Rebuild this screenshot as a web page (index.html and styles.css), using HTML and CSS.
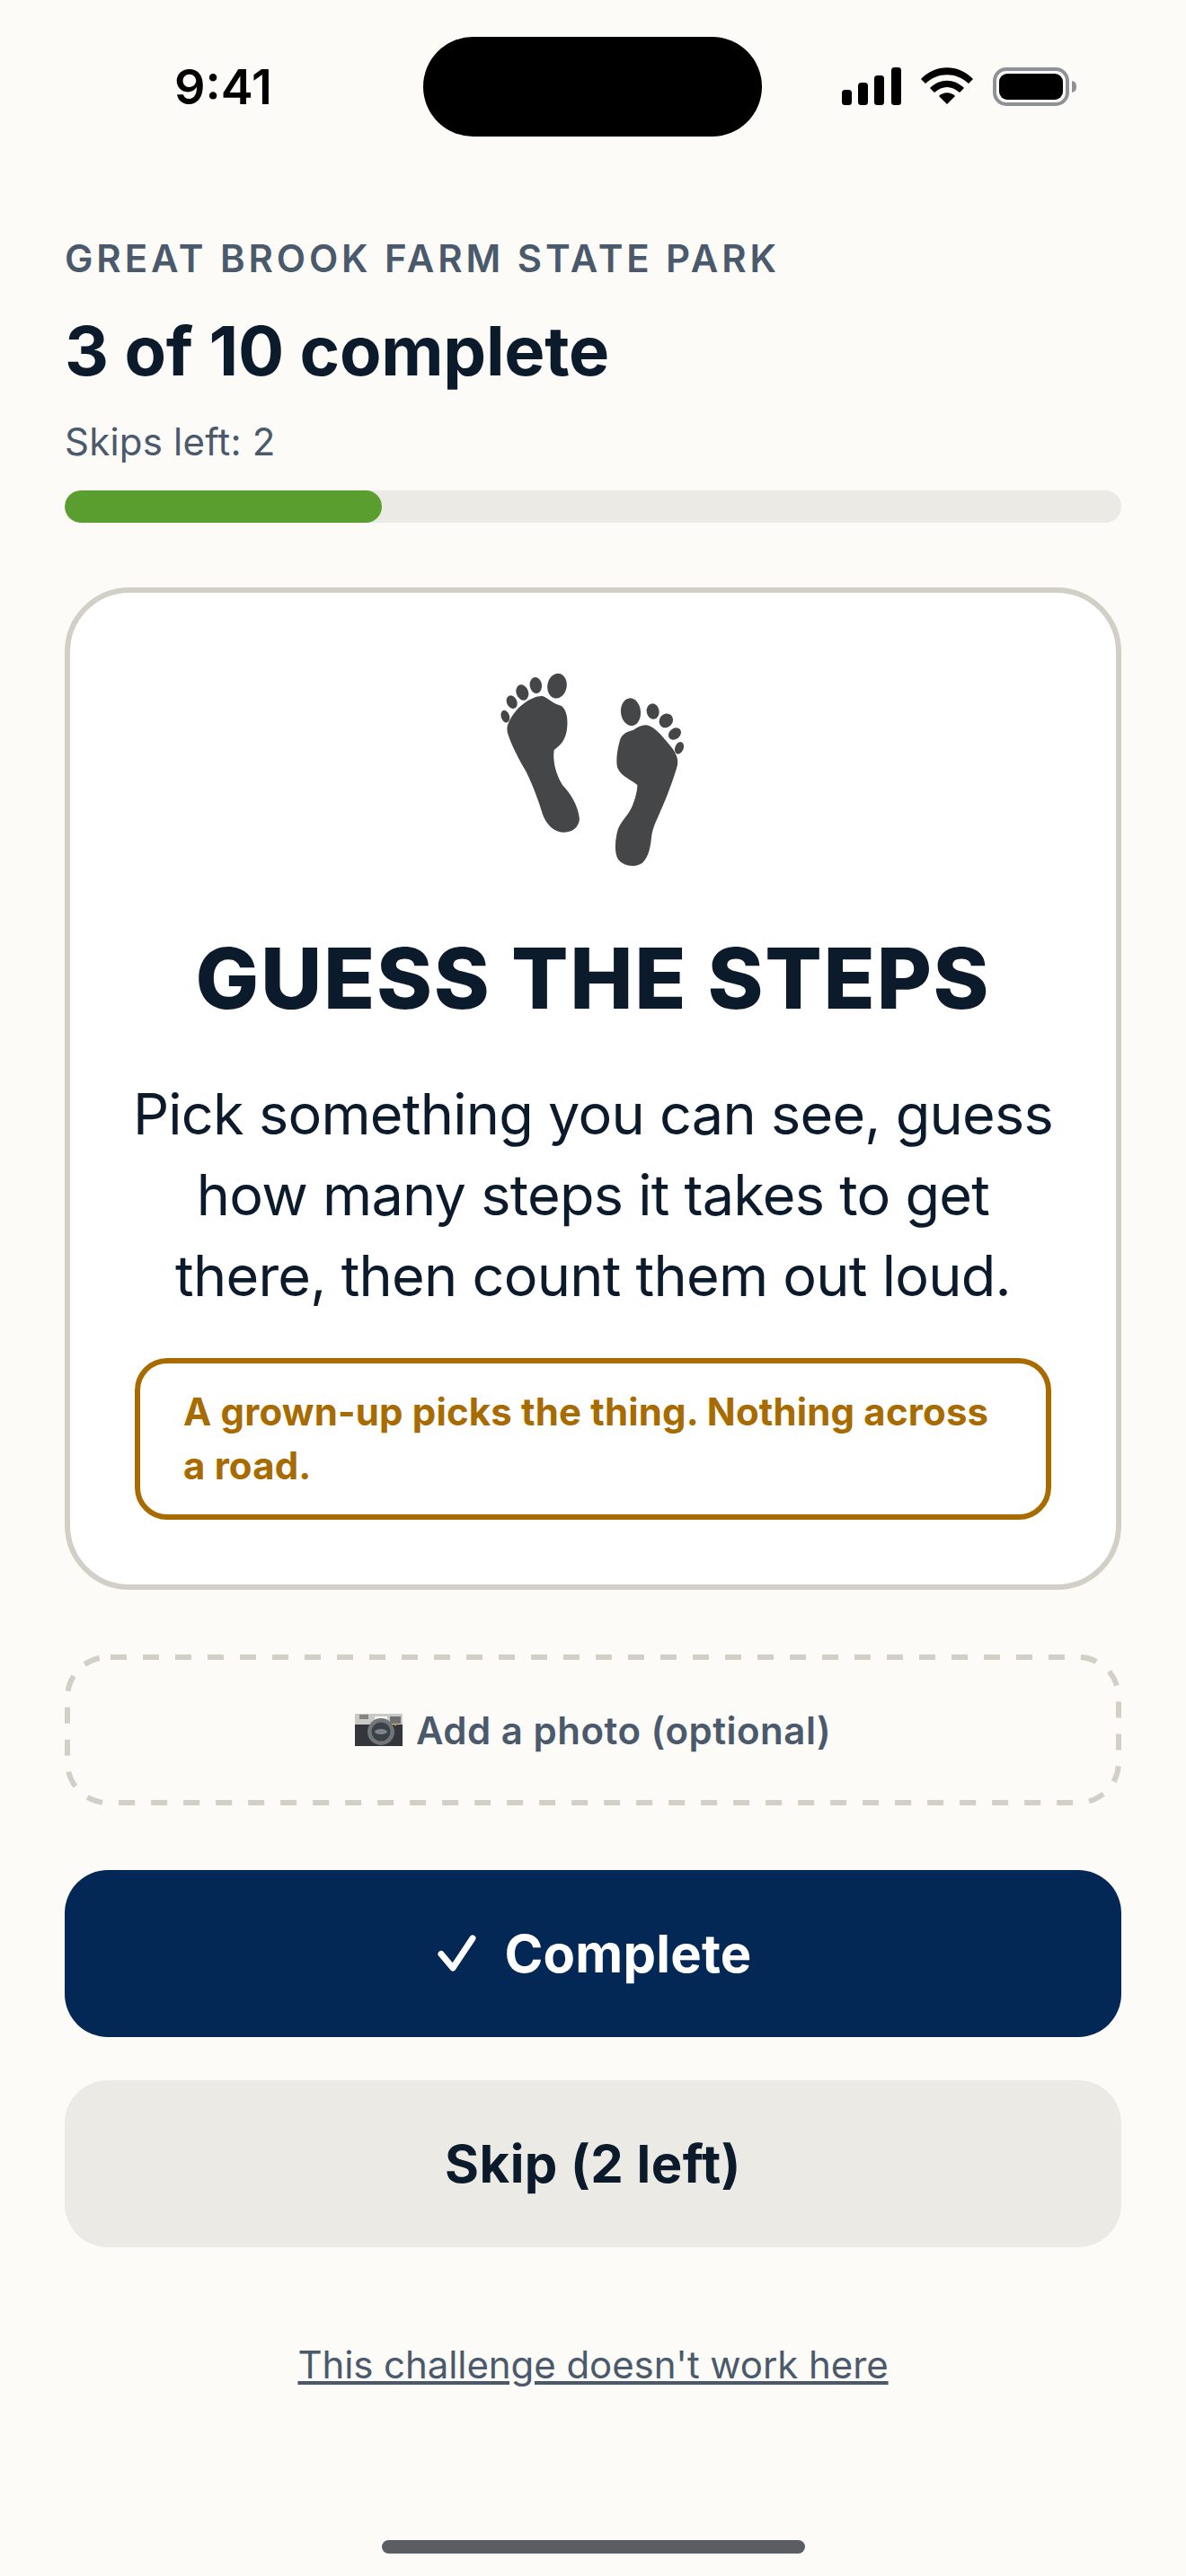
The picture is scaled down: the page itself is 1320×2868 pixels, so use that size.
FILE: index.html
```html
<!DOCTYPE html>
<html lang="en">
<head>
<meta charset="utf-8">
<title>Great Brook Farm State Park</title>
<link rel="stylesheet" href="styles.css">
</head>
<body>
<div class="page">
  <header class="status">
    <span class="time">9:41</span>
    <div class="island"></div>
    <div class="status-icons">
      <svg class="signal" viewBox="0 0 66 42" width="66" height="42"><rect x="0" y="25" width="11" height="17" rx="3.5"/><rect x="18" y="17" width="11" height="25" rx="3.5"/><rect x="36" y="9" width="11" height="33" rx="3.5"/><rect x="55" y="0" width="11" height="42" rx="3.5"/></svg>
      <svg class="wifi" viewBox="0 0 58 42" width="58" height="42"><path d="M0 13 C16 -4 42 -4 58 13 L53 18 C39 5 19 5 5 18Z"/><path d="M10 23 C21 12 37 12 48 23 L43 28 C34 20 24 20 15 28Z"/><path d="M20 32 C25 27 33 27 38 32 L29 41Z"/></svg>
      <svg class="battery" viewBox="0 0 94 43" width="94" height="43"><rect x="2" y="2" width="81" height="39" rx="13" fill="none" stroke="#8e9297" stroke-width="4"/><rect x="7" y="7" width="71" height="29" rx="9"/><path d="M88 15 C92 16 93 18 93 21.5 C93 25 92 27 88 28Z" fill="#8e9297"/></svg>
    </div>
  </header>

  <main class="content">
    <p class="park">GREAT BROOK FARM STATE PARK</p>
    <h1 class="count">3 of 10 complete</h1>
    <p class="skips">Skips left: 2</p>
    <div class="track"><div class="fill" style="width:30%"></div></div>

    <section class="card">
      <svg class="feet" viewBox="0 0 960 810" width="320" height="270" fill="#454648">
        <path d="M195 262 C205 235 225 205 255 185 C275 172 295 163 312 165 C330 172 345 190 375 198 C392 212 396 240 394 265 C392 300 380 325 350 345 C345 380 355 425 378 462 C405 490 430 530 435 575 C432 605 410 620 380 620 C350 618 325 595 312 560 C300 520 280 465 258 420 C235 380 210 335 197 295 C193 285 192 272 195 262Z"/>
        <ellipse cx="360" cy="131" rx="32" ry="42" transform="rotate(10 360 131)"/>
        <ellipse cx="289" cy="129" rx="20" ry="27" transform="rotate(-8 289 129)"/>
        <ellipse cx="244" cy="153" rx="20" ry="27" transform="rotate(-20 244 153)"/>
        <ellipse cx="209" cy="185" rx="17" ry="23" transform="rotate(-25 209 185)"/>
        <ellipse cx="187" cy="233" rx="14" ry="21" transform="rotate(-18 187 233)"/>
        <path d="M660 262 C690 268 720 310 745 340 C760 360 765 380 762 395 C750 440 725 505 705 550 C690 585 680 605 676 630 C672 665 668 700 645 722 C620 738 585 735 565 712 C550 690 553 640 565 605 C580 575 600 560 612 530 C622 505 628 480 628 462 C610 445 575 435 562 405 C555 380 562 340 570 312 C575 292 595 283 615 278 C630 268 645 260 660 262Z"/>
        <ellipse cx="606" cy="218" rx="33" ry="46" transform="rotate(-6 606 218)"/>
        <ellipse cx="680" cy="216" rx="21" ry="26" transform="rotate(-10 680 216)"/>
        <ellipse cx="724" cy="247" rx="22" ry="25" transform="rotate(40 724 247)"/>
        <ellipse cx="753" cy="291" rx="18" ry="23" transform="rotate(50 753 291)"/>
        <ellipse cx="768" cy="338" rx="14" ry="21" transform="rotate(22 768 338)"/>
      </svg>
      <h2 class="title">GUESS THE STEPS</h2>
      <p class="desc">Pick something you can see, guess how many steps it takes to get there, then count them out loud.</p>
      <p class="note">A grown-up picks the thing. Nothing across a road.</p>
    </section>

    <button class="photo" type="button">
      <svg class="dash" viewBox="0 0 1176 168" width="1176" height="168"><rect x="3" y="3" width="1170" height="162" rx="45" fill="none" stroke="#d2cfc6" stroke-width="6" stroke-dasharray="18 18" stroke-dashoffset="-3"/></svg>
      <svg class="cam" viewBox="0 0 53 36" width="53" height="36"><rect x="0" y="0" width="53" height="36" fill="#c9c9c6"/><rect x="22" y="3" width="14" height="4" fill="#f4f4f2"/><rect x="39" y="3" width="12" height="8" fill="#6d7074"/><rect x="5" y="1" width="10" height="5" fill="#83857f"/><rect x="0" y="12" width="53" height="24" fill="#33363b"/><circle cx="29" cy="20" r="15" fill="#70757a"/><circle cx="29" cy="20" r="10.5" fill="#3b4148"/><ellipse cx="29" cy="20" rx="7" ry="3" fill="#7d838a"/><circle cx="45" cy="12" r="1.4" fill="#d99a20"/></svg>
      <span>Add a photo (optional)</span>
    </button>

    <button class="btn primary" type="button">
      <svg class="check" viewBox="0 0 44 42" width="44" height="42"><path d="M4 21.5 L17 37 L39 4" fill="none" stroke="#fff" stroke-width="7" stroke-linecap="round" stroke-linejoin="round"/></svg>
      <span>Complete</span>
    </button>
    <button class="btn secondary" type="button">Skip (2 left)</button>
    <a class="report" href="#">This challenge doesn't work here</a>
  </main>

  <div class="home"></div>
</div>
</body>
</html>
```
FILE: styles.css
```css
* { box-sizing: border-box; }
html, body { margin: 0; padding: 0; }
body {
  background: #fcfbf8;
  color: #0c1b2c;
  font-family: Inter, "Liberation Sans", sans-serif;
}
.page {
  display: flex;
  flex-direction: column;
  height: 2868px;
  overflow: hidden;
}
.status {
  display: flex;
  align-items: center;
  height: 150px;
  padding-top: 42px;
  flex: none;
}
.time {
  width: 471px;
  margin-top: 2px;
  padding-left: 194px;
  font-size: 54px;
  font-weight: 600;
  color: #000;
  line-height: 64px;
}
.island {
  width: 377px;
  height: 111px;
  border-radius: 56px;
  background: #000;
  flex: none;
}
.status-icons {
  display: flex;
  align-items: center;
  gap: 22px;
  margin-left: 89px;
}
.status-icons svg { display: block; fill: #000; }
.content {
  display: flex;
  flex-direction: column;
  padding: 114px 72px 0;
}
.park {
  margin: 0;
  font-size: 42px;
  line-height: 48px;
  font-weight: 600;
  letter-spacing: 3.9px;
  color: #4a5a6c;
}
.count {
  margin: 34px 0 0;
  font-size: 76px;
  line-height: 88px;
  font-weight: 700;
  letter-spacing: -0.3px;
}
.skips {
  margin: 31px 0 0;
  font-size: 42px;
  line-height: 54px;
  letter-spacing: 0.2px;
  color: #4a5a6c;
}
.track {
  height: 36px;
  margin-top: 27px;
  border-radius: 18px;
  background: #ebeae5;
  overflow: hidden;
}
.fill {
  height: 100%;
  border-radius: 18px;
  background: #5a9e2f;
}
.card {
  display: flex;
  flex-direction: column;
  align-items: center;
  margin-top: 72px;
  padding: 60px 72px 72px;
  background: #fff;
  border: 6px solid #d2cfc6;
  border-radius: 72px;
}
.feet { display: block; flex: none; }
.title {
  margin: 44px 0 0;
  font-size: 94px;
  line-height: 110px;
  font-weight: 800;
  letter-spacing: 1.7px;
  white-space: nowrap;
  text-align: center;
}
.desc {
  margin: 51px -12px 0;
  font-size: 63px;
  line-height: 90px;
  letter-spacing: -0.75px;
  text-align: center;
}
.note {
  align-self: stretch;
  margin: 47px 0 0;
  padding: 24px 48px;
  font-size: 42px;
  line-height: 60px;
  font-weight: 700;
  letter-spacing: 0.15px;
  color: #a86b00;
  border: 6px solid #a86b00;
  border-radius: 36px;
}
.photo {
  position: relative;
  display: flex;
  align-items: center;
  justify-content: center;
  gap: 15px;
  height: 168px;
  margin-top: 72px;
  padding: 0;
  background: none;
  border: 0;
  font: 600 42px Inter, "Liberation Sans", sans-serif;
  letter-spacing: 0.5px;
  color: #4a5a6c;
}
.dash {
  position: absolute;
  left: 0;
  top: 0;
}
.cam { display: block; flex: none; }
.btn {
  display: flex;
  align-items: center;
  justify-content: center;
  height: 186px;
  padding: 0;
  border: 0;
  border-radius: 48px;
  font: 700 58px Inter, "Liberation Sans", sans-serif;
  letter-spacing: 0.2px;
}
.check { display: block; flex: none; }
.primary {
  gap: 30px;
  margin-top: 72px;
  padding-left: 4px;
  background: #032855;
  color: #fff;
}
.secondary {
  margin-top: 48px;
  background: #ebeae5;
  color: #0c1b2c;
  letter-spacing: 0.45px;
}
.report {
  align-self: center;
  margin-top: 104px;
  font-size: 42px;
  line-height: 54px;
  letter-spacing: -0.08px;
  color: #4a5a6c;
  text-decoration: underline;
}
.home {
  width: 471px;
  height: 15px;
  margin: auto auto 25px;
  border-radius: 8px;
  background: #5a5e63;
  flex: none;
}
```
